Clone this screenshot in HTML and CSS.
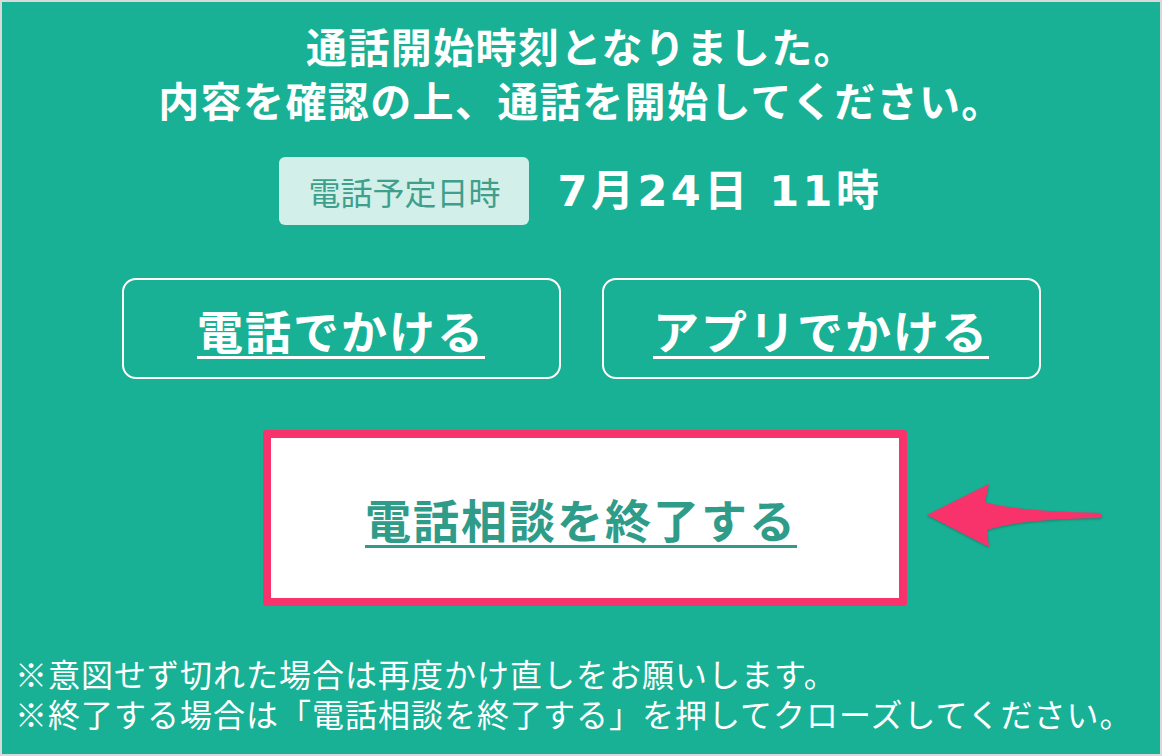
FILE: index.html
```html
<!DOCTYPE html>
<html lang="ja">
<head>
<meta charset="utf-8">
<title>通話開始</title>
<link rel="stylesheet" href="styles.css">
</head>
<body>
<div class="screen">
  <h1 class="title"><span class="line">通話開始時刻となりました。</span><span class="line">内容を確認の上、通話を開始してください。</span></h1>
  <div class="schedule">
    <span class="badge">電話予定日時</span>
    <span class="date">7月24日 11時</span>
  </div>
  <div class="actions">
    <a class="call-btn" href="#">電話でかける</a>
    <a class="call-btn" href="#">アプリでかける</a>
  </div>
  <div class="end-box">
    <a class="end-link" href="#">電話相談を終了する</a>
  </div>
  <div class="notes">
    <p>※意図せず切れた場合は再度かけ直しをお願いします。</p>
    <p>※終了する場合は「電話相談を終了する」を押してクローズしてください。</p>
  </div>
  <svg class="arrow" width="190" height="85" viewBox="0 0 190 85" aria-hidden="true">
    <path d="M7 40 L69 9 L65 27 Q92 36 180 38 Q184 40.5 180 43 Q100 44 67 55 L69 72 Z" fill="#f8336b"/>
  </svg>
</div>
</body>
</html>
```
FILE: styles.css
```css
html, body {
  margin: 0;
  padding: 0;
}
body {
  font-family: "Noto Sans CJK JP", "Noto Sans", sans-serif;
}
.screen {
  position: relative;
  width: 1162px;
  height: 756px;
  box-sizing: border-box;
  border: 2px solid #d9d9d9;
  background: #18b195;
  display: flex;
  flex-direction: column;
  align-items: center;
  padding-top: 16px;
  color: #ffffff;
}
.title {
  margin: 0;
  font-size: 41px;
  font-weight: 700;
  text-align: center;
  letter-spacing: 1.4px;
  display: flex;
  flex-direction: column;
  align-items: center;
}
.title .line {
  display: block;
  height: 54px;
  line-height: 54px;
}
.schedule {
  margin-top: 31px;
  display: flex;
  align-items: center;
  gap: 28px;
}
.badge {
  height: 68px;
  line-height: 68px;
  padding: 0 29px;
  border-radius: 6px;
  background: #d3efe9;
  color: #3f9f8c;
  font-size: 32px;
}
.date {
  font-family: "DejaVu Sans", "Noto Sans CJK JP", sans-serif;
  font-weight: 700;
  font-size: 43px;
  letter-spacing: 3.5px;
  line-height: 68px;
}
.actions {
  margin-top: 53px;
  display: flex;
  gap: 41px;
}
.call-btn {
  width: 439px;
  height: 101px;
  box-sizing: border-box;
  border: 2.5px solid #ffffff;
  border-radius: 14px;
  display: flex;
  align-items: center;
  justify-content: center;
  color: #ffffff;
  font-size: 46px;
  font-weight: 700;
  letter-spacing: 2px;
  text-decoration: underline;
  text-decoration-thickness: 3px;
  text-underline-offset: 7px;
}
.end-box {
  margin-top: 51px;
  margin-left: 8px;
  width: 644px;
  height: 176px;
  box-sizing: border-box;
  border: 8px solid #f8336b;
  border-radius: 3px;
  background: #ffffff;
  display: flex;
  align-items: center;
  justify-content: center;
}
.end-link {
  color: #2f9c89;
  font-size: 46px;
  font-weight: 700;
  letter-spacing: 2px;
  text-decoration: underline;
  text-decoration-thickness: 3px;
  text-underline-offset: 7px;
  margin-right: 8px;
}
.notes {
  align-self: stretch;
  margin-top: 47px;
  padding-left: 13px;
  font-size: 32px;
  letter-spacing: 1px;
}
.notes p {
  margin: 0;
  height: 40px;
  line-height: 40px;
  white-space: nowrap;
}
.arrow {
  position: absolute;
  left: 918px;
  top: 473px;
  filter: drop-shadow(0 1px 1px rgba(0, 0, 0, 0.25));
}
```
